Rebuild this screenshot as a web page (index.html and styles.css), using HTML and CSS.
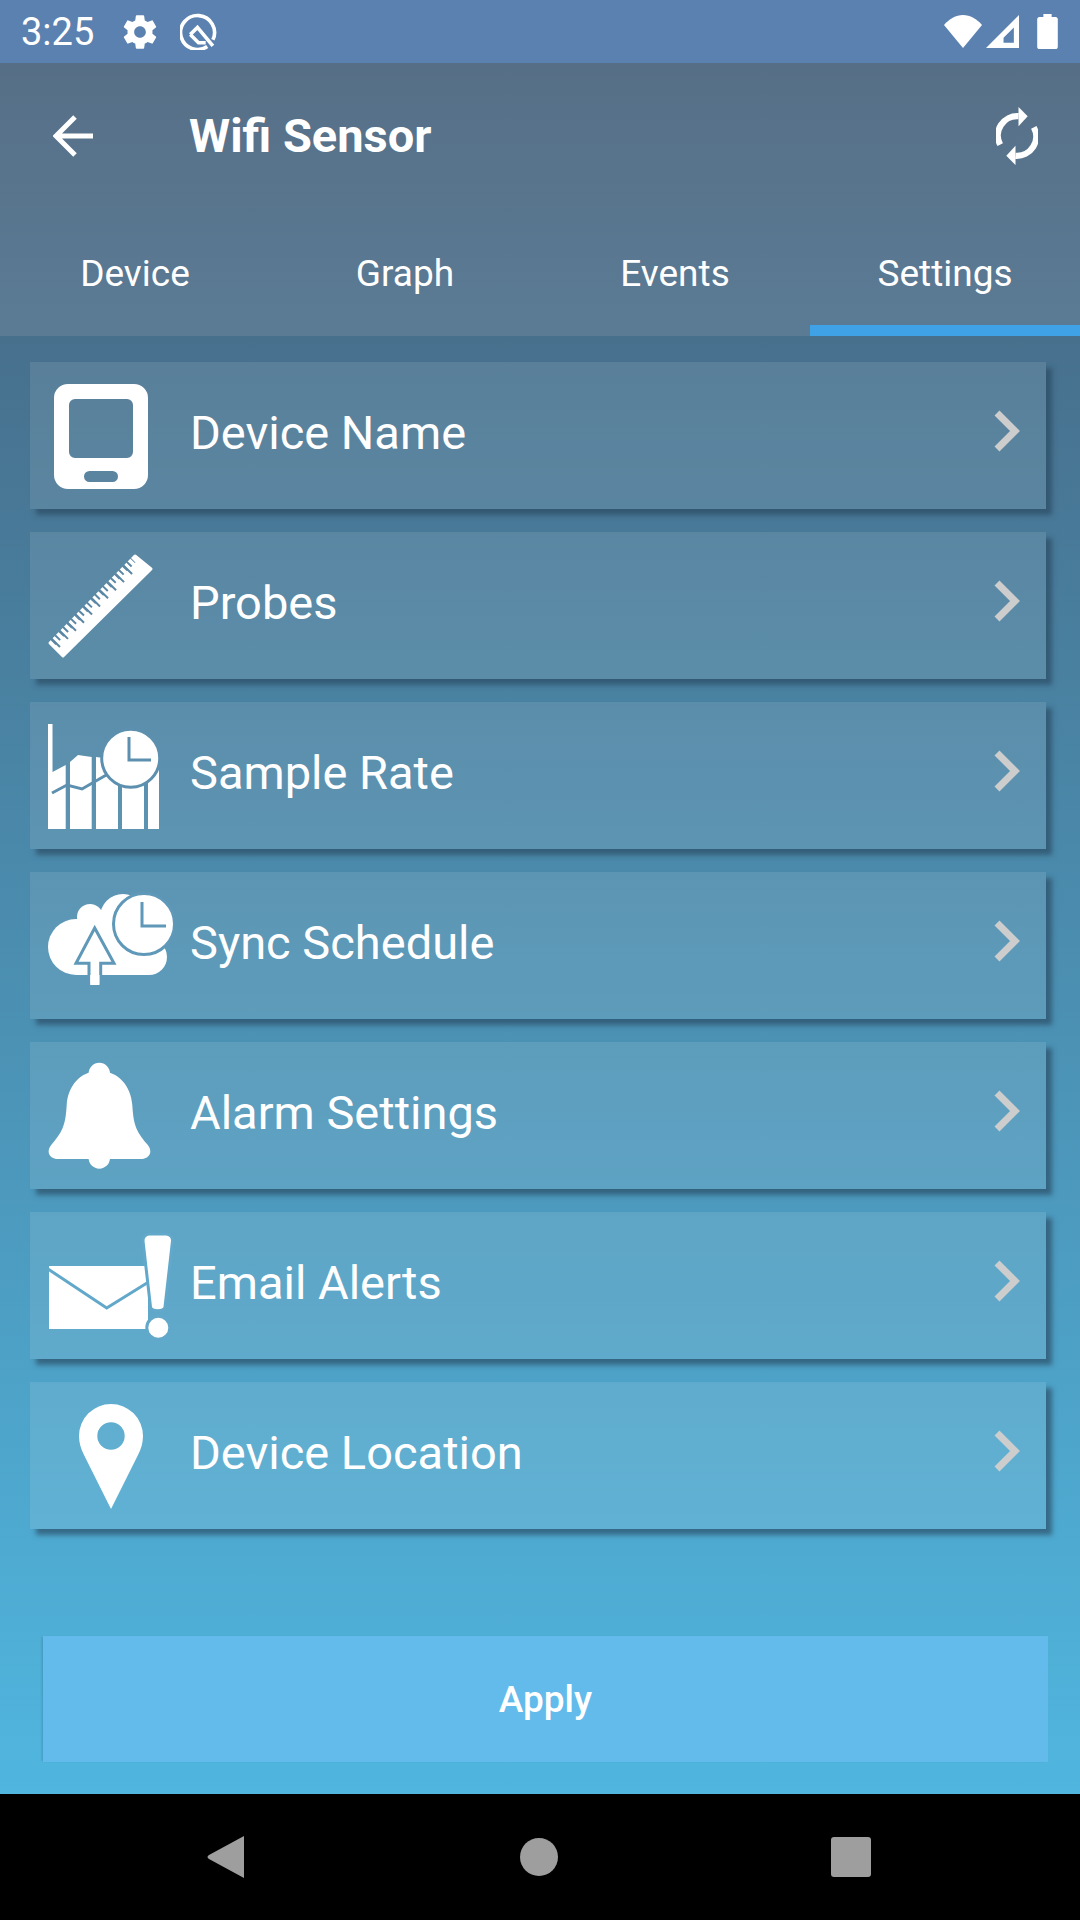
FILE: index.html
```html
<!DOCTYPE html>
<html lang="en">
<head>
    <meta charset="UTF-8">
    <meta name="viewport" content="width=device-width, initial-scale=1.0">
    <title>Wifi Sensor</title>
    <link rel="stylesheet" href="styles.css">
</head>
<body>
    <div class="screen">
        <div class="status-bar">
            <span class="status-time">3:25</span>
            <svg class="status-gear" viewBox="0 0 24 24"><path d="M19.43 12.98c.04-.32.07-.64.07-.98s-.03-.66-.07-.98l2.11-1.65c.19-.15.24-.42.12-.64l-2-3.46c-.12-.22-.39-.3-.61-.22l-2.49 1c-.52-.4-1.08-.73-1.69-.98l-.38-2.65C14.46 2.18 14.25 2 14 2h-4c-.25 0-.46.18-.49.42l-.38 2.65c-.61.25-1.17.59-1.69.98l-2.49-1c-.23-.09-.49 0-.61.22l-2 3.46c-.13.22-.07.49.12.64l2.11 1.65c-.04.32-.07.65-.07.98s.03.66.07.98l-2.11 1.65c-.19.15-.24.42-.12.64l2 3.46c.12.22.39.3.61.22l2.49-1c.52.4 1.08.73 1.69.98l.38 2.65c.03.24.24.42.49.42h4c.25 0 .46-.18.49-.42l.38-2.65c.61-.25 1.17-.59 1.69-.98l2.49 1c.23.09.49 0 .61-.22l2-3.46c.12-.22.07-.49-.12-.64l-2.11-1.65zM12 15.5c-1.93 0-3.5-1.57-3.5-3.5s1.57-3.5 3.5-3.5 3.5 1.57 3.5 3.5-1.57 3.5-3.5 3.5z"/></svg>
            <svg class="status-badge" viewBox="0 0 36 36">
                <path class="line" d="M26.500 32.500A16.500 16.500 0 1 1 32 26"/>
                <path class="line" d="M10 21L17 14 32 32"/>
                <path class="line" d="M10 21L18 29H25"/>
            </svg>
            <div class="status-right">
                <svg class="status-wifi" viewBox="0 0 38 33"><path d="M19 33L0 10C5 4 12 0 19 0s14 4 19 10z"/></svg>
                <svg class="status-signal" viewBox="0 0 32 32"><path fill-rule="evenodd" d="M32 0V32H0zM27 12L17 22V27H27z"/></svg>
                <svg class="status-battery" viewBox="0 0 20 34"><path d="M6 0h8v3h4c1 0 2 1 2 2v27c0 1-1 2-2 2H2c-1 0-2-1-2-2V5c0-1 1-2 2-2h4z"/></svg>
            </div>
        </div>

        <div class="app-bar">
            <div class="toolbar">
                <svg class="back-icon" viewBox="0 0 40 42"><path d="M40 21H3M22 2L3 21l19 19"/></svg>
                <h1 class="toolbar-title">Wifi Sensor</h1>
                <svg class="sync-icon" viewBox="0 0 41 57">
                    <path class="sync-arc" d="M4 37A19 19 0 0 1 22 9"/>
                    <path d="M22 0L31 9 22 19z"/>
                    <g transform="rotate(180 20.500 28.500)">
                        <path class="sync-arc" d="M4 37A19 19 0 0 1 22 9"/>
                        <path d="M22 0L31 9 22 19z"/>
                    </g>
                </svg>
            </div>
            <div class="tabs">
                <div class="tab">Device</div>
                <div class="tab">Graph</div>
                <div class="tab">Events</div>
                <div class="tab active">Settings</div>
            </div>
        </div>

        <div class="content">
            <ul class="settings-list">
                <li class="settings-row">
                    <svg class="row-icon" viewBox="0 0 130 110">
                        <path fill-rule="evenodd" d="M24 3H90A14 14 0 0 1 104 17V94A14 14 0 0 1 90 108H24A14 14 0 0 1 10 94V17A14 14 0 0 1 24 3zM31 18A6 6 0 0 0 25 24V71A6 6 0 0 0 31 77H83A6 6 0 0 0 89 71V24A6 6 0 0 0 83 18zM45.500 90A5.500 5.500 0 0 0 45.500 101H68.500A5.500 5.500 0 0 0 68.500 90z"/>
                    </svg>
                    <span class="row-label">Device Name</span>
                    <svg class="row-chevron" viewBox="0 0 26 42"><path d="M3 3L21 21 3 39"/></svg>
                </li>
                <li class="settings-row">
                    <svg class="row-icon" viewBox="0 0 130 110">
                        <path class="ruler" d="M91 5L107 18 19 105 6 92z"/>
                        <path class="cut ticks-long" d="M11 92.500L90 12.500"/>
                        <path class="cut ticks-short" d="M9 91.500L89 9"/>
                    </svg>
                    <span class="row-label">Probes</span>
                    <svg class="row-chevron" viewBox="0 0 26 42"><path d="M3 3L21 21 3 39"/></svg>
                </li>
                <li class="settings-row">
                    <svg class="row-icon" viewBox="0 0 130 110">
                        <path d="M4 3H8.500V51L21.700 44V108H4z"/>
                        <path d="M26 41L34 34 47.700 36V108H26z"/>
                        <path d="M52 36L60 37 74 60V108H52z"/>
                        <path d="M78 50H100V108H78z"/>
                        <path d="M104 48H115V108H104z"/>
                        <path class="cut" d="M8 72L23 64 38 68 64 53"/>
                        <circle cx="86.700" cy="37.300" r="29" class="clock-face"/>
                        <path class="cut" d="M85 16V39H107"/>
                    </svg>
                    <span class="row-label">Sample Rate</span>
                    <svg class="row-chevron" viewBox="0 0 26 42"><path d="M3 3L21 21 3 39"/></svg>
                </li>
                <li class="settings-row">
                    <svg class="row-icon" viewBox="0 0 130 110">
                        <circle cx="32" cy="56" r="28"/>
                        <circle cx="46" cy="26" r="13"/>
                        <circle cx="79" cy="26" r="23"/>
                        <circle cx="105" cy="66" r="18"/>
                        <path d="M32 42H105V84H32z"/>
                        <path d="M35 30H80V50H35z"/>
                        <circle cx="100" cy="33" r="30.500" class="clock-face"/>
                        <path class="cut" d="M98 11V35H122"/>
                        <path class="cut-fill" d="M50.700 37L32 72.300H45V94H56.700V72.300H70z"/>
                        <path d="M46.200 84H55.500V94H46.200z"/>
                    </svg>
                    <span class="row-label">Sync Schedule</span>
                    <svg class="row-chevron" viewBox="0 0 26 42"><path d="M3 3L21 21 3 39"/></svg>
                </li>
                <li class="settings-row">
                    <svg class="row-icon" viewBox="0 0 130 110">
                        <circle cx="55.300" cy="12.500" r="10.700"/>
                        <circle cx="55.300" cy="97" r="10.700"/>
                        <path d="M55.300 10C36 10 24 25 22.700 44 21.500 62 20 69 8 83 1 91 6 98 14 98H97C105 98 110 91 103 83 91 69 89.500 62 88.300 44 87 25 74.500 10 55.300 10z"/>
                    </svg>
                    <span class="row-label">Alarm Settings</span>
                    <svg class="row-chevron" viewBox="0 0 26 42"><path d="M3 3L21 21 3 39"/></svg>
                </li>
                <li class="settings-row">
                    <svg class="row-icon" viewBox="0 0 130 110">
                        <path d="M5 35H104V98H5z"/>
                        <path class="cut" d="M4 38L62.700 77 103 52"/>
                        <path class="cut-fill" d="M105 3H122A6.500 6.500 0 0 1 128.500 10L121 76C120.500 81 107 81 106.500 76L99 10A6.500 6.500 0 0 1 105 3z"/>
                        <circle cx="114.300" cy="96.700" r="11.500" class="clock-face"/>
                    </svg>
                    <span class="row-label">Email Alerts</span>
                    <svg class="row-chevron" viewBox="0 0 26 42"><path d="M3 3L21 21 3 39"/></svg>
                </li>
                <li class="settings-row">
                    <svg class="row-icon" viewBox="0 0 130 110">
                        <path fill-rule="evenodd" d="M67 3A32 32 0 0 1 99 35C99 42 97 48 94 54L67 108 40 54C37 48 35 42 35 35A32 32 0 0 1 67 3zM67 21.300A13.700 13.700 0 1 0 67 48.700 13.700 13.700 0 1 0 67 21.300z"/>
                    </svg>
                    <span class="row-label">Device Location</span>
                    <svg class="row-chevron" viewBox="0 0 26 42"><path d="M3 3L21 21 3 39"/></svg>
                </li>
            </ul>
            <button class="apply-btn">Apply</button>
        </div>

        <div class="nav-bar">
            <svg class="nav-icon" viewBox="0 0 40 44"><path d="M38 1V43L3 24C1 23 1 21 3 20z"/></svg>
            <svg class="nav-icon" viewBox="0 0 40 44"><circle cx="20" cy="22" r="19"/></svg>
            <svg class="nav-icon" viewBox="0 0 40 44"><rect y="2" width="40" height="40" rx="3"/></svg>
        </div>
    </div>
</body>
</html>
```

FILE: styles.css
```css
* {
    margin: 0;
    padding: 0;
    box-sizing: border-box;
}

body {
    font-family: Roboto, 'Noto Sans', sans-serif;
    background: black;
}

.screen {
    width: 1080px;
    height: 1920px;
    display: flex;
    flex-direction: column;
    color: white;
}

svg {
    display: block;
    fill: white;
    flex: none;
}

/* status bar */
.status-bar {
    height: 63px;
    background: #5b81b0;
    display: flex;
    align-items: center;
    padding: 0 22px 0 21px;
}

.status-time {
    font-size: 38px;
    width: 99px;
}

.status-gear {
    width: 40px;
    height: 40px;
    margin-right: 20px;
}

.status-badge {
    width: 37px;
    height: 37px;
}

.status-badge .line {
    fill: none;
    stroke: white;
    stroke-width: 3.500;
}

.status-right {
    margin-left: auto;
    display: flex;
    align-items: center;
}

.status-wifi {
    width: 38px;
    height: 33px;
    margin-right: 4px;
}

.status-signal {
    width: 33px;
    height: 33px;
    margin-right: 18px;
}

.status-battery {
    width: 21px;
    height: 35px;
}

/* app bar */
.app-bar {
    height: 273px;
    background: linear-gradient(180deg, #566f87 0%, #5b7b95 100%);
    display: flex;
    flex-direction: column;
}

.toolbar {
    height: 146px;
    display: flex;
    align-items: center;
    padding: 0 42px 0 53px;
}

.back-icon {
    width: 40px;
    height: 42px;
    margin-right: 96px;
    fill: none;
    stroke: white;
    stroke-width: 5;
}

.toolbar-title {
    font-size: 47px;
    font-weight: 700;
    flex: 1;
    margin-bottom: 2px;
}

.sync-icon {
    width: 42px;
    height: 58px;
}

.sync-arc {
    fill: none;
    stroke: white;
    stroke-width: 6;
}

.tabs {
    flex: 1;
    display: flex;
}

.tab {
    flex: 1;
    font-size: 37px;
    display: flex;
    align-items: center;
    justify-content: center;
    padding-top: 12px;
    border-bottom: 11px solid transparent;
}

.tab.active {
    border-bottom-color: #3fa2e6;
}

/* settings list */
.content {
    flex: 1;
    background: linear-gradient(180deg, #47708d 0%, #50b6df 100%);
    display: flex;
    flex-direction: column;
    padding: 26px 34px 32px 30px;
}

.settings-list {
    list-style: none;
    display: flex;
    flex-direction: column;
    gap: 23px;
}

.settings-row {
    height: 147px;
    background: rgba(255, 255, 255, 0.1);
    box-shadow: 6px 6px 5px rgba(40, 70, 95, 0.65);
    display: flex;
    align-items: center;
    padding-left: 14px;
    padding-right: 26px;
    --cut: #5b8aa8;
}

.settings-row:nth-child(1) { --cut: #5a7f9b; }
.settings-row:nth-child(2) { --cut: #5b87a4; }
.settings-row:nth-child(3) { --cut: #5d90af; }
.settings-row:nth-child(4) { --cut: #5f98b8; }
.settings-row:nth-child(5) { --cut: #61a0c1; }
.settings-row:nth-child(6) { --cut: #62a8ca; }
.settings-row:nth-child(7) { --cut: #63afd1; }

.row-icon {
    width: 130px;
    height: 110px;
}

.row-icon .cut {
    fill: none;
    stroke: var(--cut);
    stroke-width: 3;
}

.row-icon .ruler {
    stroke: white;
    stroke-width: 3;
    stroke-linejoin: round;
}

.row-icon .ticks-long {
    stroke-width: 12;
    stroke-dasharray: 2 9.400;
}

.row-icon .ticks-short {
    stroke-width: 7;
    stroke-dasharray: 2 3.700;
}

.row-icon .cut-fill,
.row-icon .clock-face {
    stroke: var(--cut);
    stroke-width: 3;
}

.row-label {
    flex: 1;
    font-size: 47px;
    margin-left: 16px;
    margin-bottom: 7px;
}

.row-chevron {
    width: 26px;
    height: 42px;
    margin-bottom: 10px;
    fill: none;
    stroke: #cdcdcd;
    stroke-width: 7;
}

.apply-btn {
    margin: auto -2px 0 13px;
    height: 126px;
    background: #62bbeb;
    border: none;
    box-shadow: -2px 0 2px -1px rgba(40, 70, 95, 0.25);
    color: white;
    font-family: inherit;
    font-size: 37px;
    font-weight: 500;
}

/* android nav */
.nav-bar {
    height: 126px;
    background: black;
    display: flex;
    align-items: center;
    justify-content: space-between;
    padding: 0 209px 0 206px;
}

.nav-icon {
    width: 40px;
    height: 44px;
    fill: #9e9e9e;
}
```
